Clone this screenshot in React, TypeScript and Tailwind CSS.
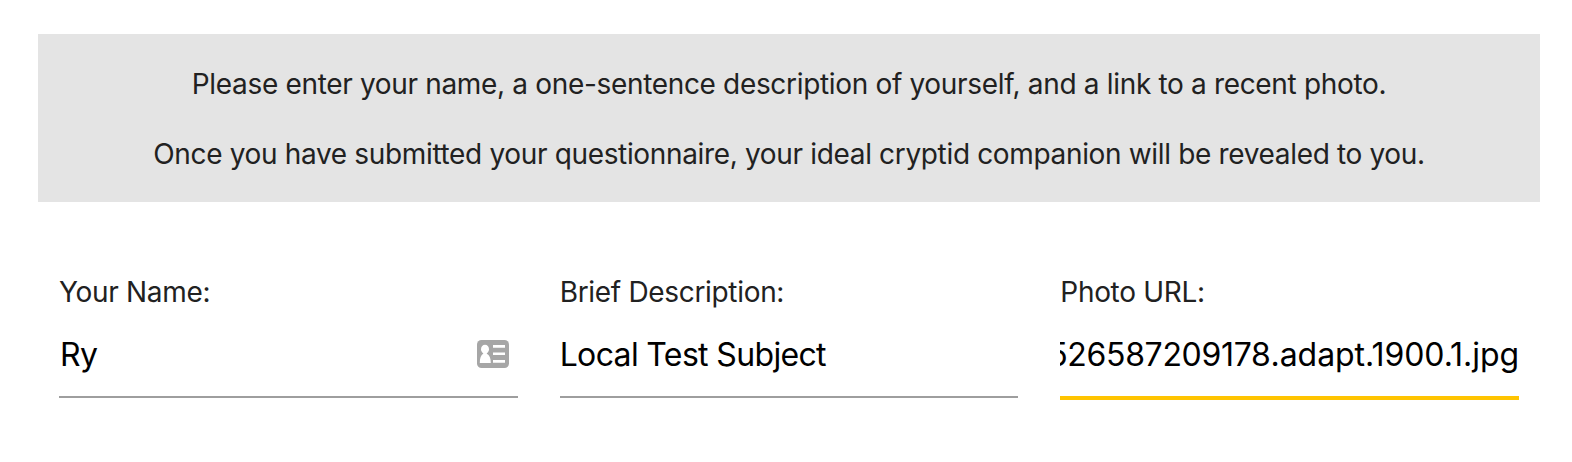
import type { ReactNode } from "react";

function ContactIcon() {
  return (
    <svg width="32" height="28" viewBox="0 0 32 28" className="mr-[9px] shrink-0" aria-hidden="true">
      <rect width="32" height="28" rx="4.5" fill="#a6a6a6" />
      <ellipse cx="8" cy="9.2" rx="4" ry="4.4" fill="#fff" />
      <path d="M2.8 23c0-5 1.2-8 3.4-9.2v-2h3.6v2c2.6 1.2 4 4.2 4 9.2z" fill="#fff" />
      <path d="M16 5h12v2.7H16zM16 12.4h12v2.7H16zM16 20h12v2.8H16z" fill="#fff" />
    </svg>
  );
}

type FieldProps = {
  label: string;
  children: ReactNode;
  focused?: boolean;
};

function Field({ label, children, focused }: FieldProps) {
  return (
    <div className="min-w-0 flex-1 px-[21px]">
      <div className="text-[28px] leading-10 tracking-[-0.32px] whitespace-nowrap">{label}</div>
      <div
        className={
          focused
            ? "flex h-[88px] items-start justify-end overflow-hidden border-b-4 border-[#ffc400] pt-[21px] text-black"
            : "flex h-[86px] items-start justify-between overflow-hidden border-b-2 border-[#9e9e9e] pt-[21px] text-black"
        }
      >
        {children}
      </div>
    </div>
  );
}

export default function App() {
  return (
    <main className="h-[462px] overflow-hidden bg-white pt-[34px] pr-8 pl-[38px] font-['Inter',sans-serif] text-[#212121]">
      <section className="h-[168px] bg-[#e4e4e4] pt-[30px] text-center text-[28px] leading-10 whitespace-nowrap">
        <p className="tracking-[-0.33px]">
          Please enter your name, a one-sentence description of yourself, and a link to a recent photo.
        </p>
        <p className="mt-[30px] tracking-[-0.34px]">
          Once you have submitted your questionnaire, your ideal cryptid companion will be revealed to you.
        </p>
      </section>
      <form className="mt-[70px] flex">
        <Field label="Your Name:">
          <span className="pl-px text-[32px] leading-[44px] tracking-[-0.6px]">Ry</span>
          <span className="flex h-[42px] items-center">
            <ContactIcon />
          </span>
        </Field>
        <Field label="Brief Description:">
          <span className="text-[32px] leading-[44px] tracking-[-0.65px]">Local Test Subject</span>
        </Field>
        <Field label="Photo URL:" focused>
          <span className="text-[32px] leading-[44px] whitespace-nowrap">
            <span className="tracking-[-0.32px]">526587209178</span>
            <span className="tracking-[-0.05px]">.adapt.1900.1.jpg</span>
          </span>
        </Field>
      </form>
    </main>
  );
}
